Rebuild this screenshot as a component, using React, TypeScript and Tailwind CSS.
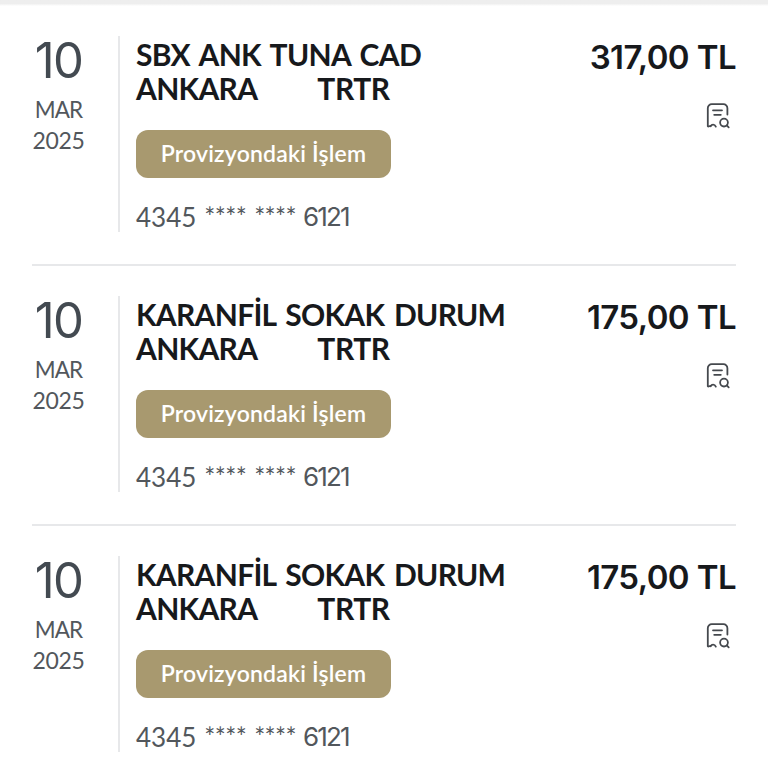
interface Transaction {
  id: number;
  day: string;
  month: string;
  year: string;
  merchant: string;
  city: string;
  country: string;
  status: string;
  card: string[];
  amount: string;
}

const transactions: Transaction[] = [
  {
    id: 1,
    day: "10",
    month: "MAR",
    year: "2025",
    merchant: "SBX ANK TUNA CAD",
    city: "ANKARA",
    country: "TRTR",
    status: "Provizyondaki İşlem",
    card: ["4345", "****", "****", "6121"],
    amount: "317,00 TL",
  },
  {
    id: 2,
    day: "10",
    month: "MAR",
    year: "2025",
    merchant: "KARANFİL SOKAK DURUM",
    city: "ANKARA",
    country: "TRTR",
    status: "Provizyondaki İşlem",
    card: ["4345", "****", "****", "6121"],
    amount: "175,00 TL",
  },
  {
    id: 3,
    day: "10",
    month: "MAR",
    year: "2025",
    merchant: "KARANFİL SOKAK DURUM",
    city: "ANKARA",
    country: "TRTR",
    status: "Provizyondaki İşlem",
    card: ["4345", "****", "****", "6121"],
    amount: "175,00 TL",
  },
];

function ReceiptSearchIcon() {
  return (
    <svg
      width="24"
      height="26"
      viewBox="0 0 24 26"
      fill="none"
      stroke="#45494e"
      strokeWidth="1.8"
      strokeLinecap="round"
      strokeLinejoin="round"
    >
      <path d="M21.4 11.5V5.2A4 4 0 0 0 17.4 1.2H5.8A4 4 0 0 0 1.8 5.2V23.2C2.6 24.2 3.8 22.4 4.8 23.2C5.6 21.2 8.6 21 9.8 23.6" />
      <path d="M7 7.3H16M8.2 11.8H14.8" />
      <circle cx="18" cy="19.6" r="3.9" />
      <path d="M20.8 22.4L22.7 24.4" />
    </svg>
  );
}

function TransactionRow({ item }: { item: Transaction }) {
  const [first, second, third, last] = item.card;

  return (
    <li className="flex h-[260px] border-b-2 border-[#e7e8ea] pt-[30px]">
      <div className="flex w-[86px] shrink-0 flex-col pr-[33px] text-center text-[#52575c]">
        <span className="font-['Inter',sans-serif] text-[49px] leading-[50px] font-normal tracking-[-1.6px] text-[#434a51]">
          {item.day}
        </span>
        <span className="mt-2 text-[22.5px] leading-[31px] tracking-[-0.9px]">
          {item.month}
        </span>
        <span className="text-[23px] leading-[31px] tracking-[-0.3px]">
          {item.year}
        </span>
      </div>

      <div className="h-[196px] w-[2px] shrink-0 bg-[#e7e8ea]" />

      <div className="min-w-0 flex-1 pl-4">
        <div className="pt-[1px] text-[30px] leading-[34px] font-bold tracking-[-0.7px] text-[#17191c] [word-spacing:3px]">
          <p>{item.merchant}</p>
          <p className="flex gap-[60px]">
            <span>{item.city}</span>
            <span className="tracking-[-0.4px]">{item.country}</span>
          </p>
        </div>

        <div className="mt-[25px] flex h-[48px] w-[255px] items-center justify-center rounded-xl bg-[#a8996f] pb-[2px] text-[23px] font-semibold tracking-[0.2px] text-white">
          {item.status}
        </div>

        <p className="mt-[20px] flex text-[26px] leading-[38px] text-[#52575c]">
          <span>{first}</span>
          <span className="ml-2 tracking-[-0.6px]">{second}</span>
          <span className="ml-2 tracking-[-0.6px]">{third}</span>
          <span className="ml-[7px] font-['Inter',sans-serif] tracking-[-1.8px]">
            {last}
          </span>
        </p>
      </div>

      <div className="flex shrink-0 flex-col items-end">
        <span className="font-['Inter',sans-serif] text-[33px] leading-[42px] font-semibold tracking-[-0.6px] text-[#17191c]">
          {item.amount}
        </span>
        <button type="button" className="mt-[25px] mr-[6px]">
          <ReceiptSearchIcon />
        </button>
      </div>
    </li>
  );
}

export default function App() {
  return (
    <div className="h-[768px] w-[768px] overflow-hidden bg-white font-['Lato',sans-serif]">
      <div className="h-[6px] bg-gradient-to-b from-[#eeeeee] from-60% to-white" />
      <ul className="px-8">
        {transactions.map((item) => (
          <TransactionRow key={item.id} item={item} />
        ))}
      </ul>
    </div>
  );
}
